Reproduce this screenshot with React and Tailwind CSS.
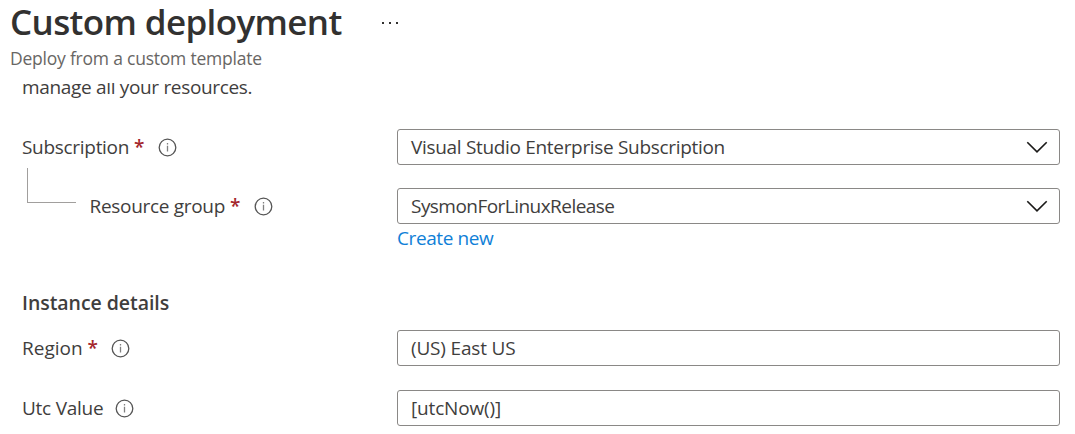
function InfoIcon({ className }) {
  return (
    <svg className={`block h-[19px] w-[19px] shrink-0 ${className}`} viewBox="0 0 19 19" fill="none">
      <circle cx="9.5" cy="9.5" r="8.3" stroke="#555555" strokeWidth="1.3" />
      <path d="M9.5 7.8V13.4M9.5 5.1V6.5" stroke="#808080" strokeWidth="1.3" />
    </svg>
  );
}

function Chevron() {
  return (
    <svg className="block h-3 w-[22px] shrink-0" viewBox="0 0 22 12" fill="none">
      <path d="M1.3 1.2L11 10.8L20.7 1.2" stroke="#1b1a19" strokeWidth="1.6" />
    </svg>
  );
}

function Required() {
  return <span className="ml-[5px] font-semibold tracking-normal text-[#a4262c]">*</span>;
}

function Field({ children, select }) {
  return (
    <div className="flex h-9 w-[663px] items-center justify-between rounded-[3px] border border-[#8a8886] bg-white pr-[11px] pl-[13px]">
      {children}
      {select && <Chevron />}
    </div>
  );
}

function Row({ label, children }) {
  return (
    <div className="flex h-9 items-center">
      <div className="flex w-[375px] shrink-0 items-center">{label}</div>
      {children}
    </div>
  );
}

export default function App() {
  return (
    <main className="h-[434px] w-[1075px] overflow-hidden bg-white font-['Open_Sans','Noto_Sans',sans-serif] text-[19px] leading-6 whitespace-nowrap text-[#3f3e3d]">
      <header className="h-[83px] pl-[10px]">
        <div className="flex h-11 items-center">
          <h1 className="w-[371px] text-[35px] leading-[44px] font-semibold tracking-[-0.63px] text-[#323130]">Custom deployment</h1>
          <svg className="mt-[2px] block h-1 w-[18px]" viewBox="0 0 18 4" fill="#323130">
            <path d="M1 1h2v2H1zM8 1h2v2H8zM15 1h2v2h-2z" />
          </svg>
        </div>
        <p className="mt-[2px] text-[17.5px] leading-6 tracking-[-0.22px] text-[#686664]">Deploy from a custom template</p>
      </header>
      <div className="pl-[22px]">
        <div className="flex h-[46px] items-start overflow-hidden">
          <p className="-mt-[8px] tracking-[-0.33px]">manage all your resources.</p>
        </div>
        <Row label={<><span className="tracking-[-0.3px]">Subscription</span><Required /><InfoIcon className="ml-[13px]" /></>}>
          <Field select><span className="tracking-[-0.32px]">Visual Studio Enterprise Subscription</span></Field>
        </Row>
        <div className="mt-[23px]">
          <Row label={<><span className="-mt-[41px] ml-[5px] block h-[35px] w-[49px] border-b border-l border-[#a19f9d]" /><span className="ml-[13.5px] tracking-[-0.31px]">Resource group</span><Required /><InfoIcon className="ml-[14px]" /></>}>
            <Field select><span className="tracking-[-0.54px]">SysmonForLinuxRelease</span></Field>
          </Row>
        </div>
        <div className="mt-[2px] pl-[375px] tracking-[-0.4px] text-[#0f80d7]">Create new</div>
        <h2 className="mt-[41px] text-[19.5px] font-semibold tracking-[-0.05px]">Instance details</h2>
        <div className="mt-[15px] flex flex-col gap-6">
          <Row label={<><span className="tracking-[0px]">Region</span><Required /><InfoIcon className="ml-[13px]" /></>}>
            <Field><span className="tracking-[-0.18px]">(US) East US</span></Field>
          </Row>
          <Row label={<><span className="tracking-[-0.25px]">Utc Value</span><InfoIcon className="ml-[12px]" /></>}>
            <Field><span className="tracking-[-0.16px]">[utcNow()]</span></Field>
          </Row>
        </div>
      </div>
    </main>
  );
}
